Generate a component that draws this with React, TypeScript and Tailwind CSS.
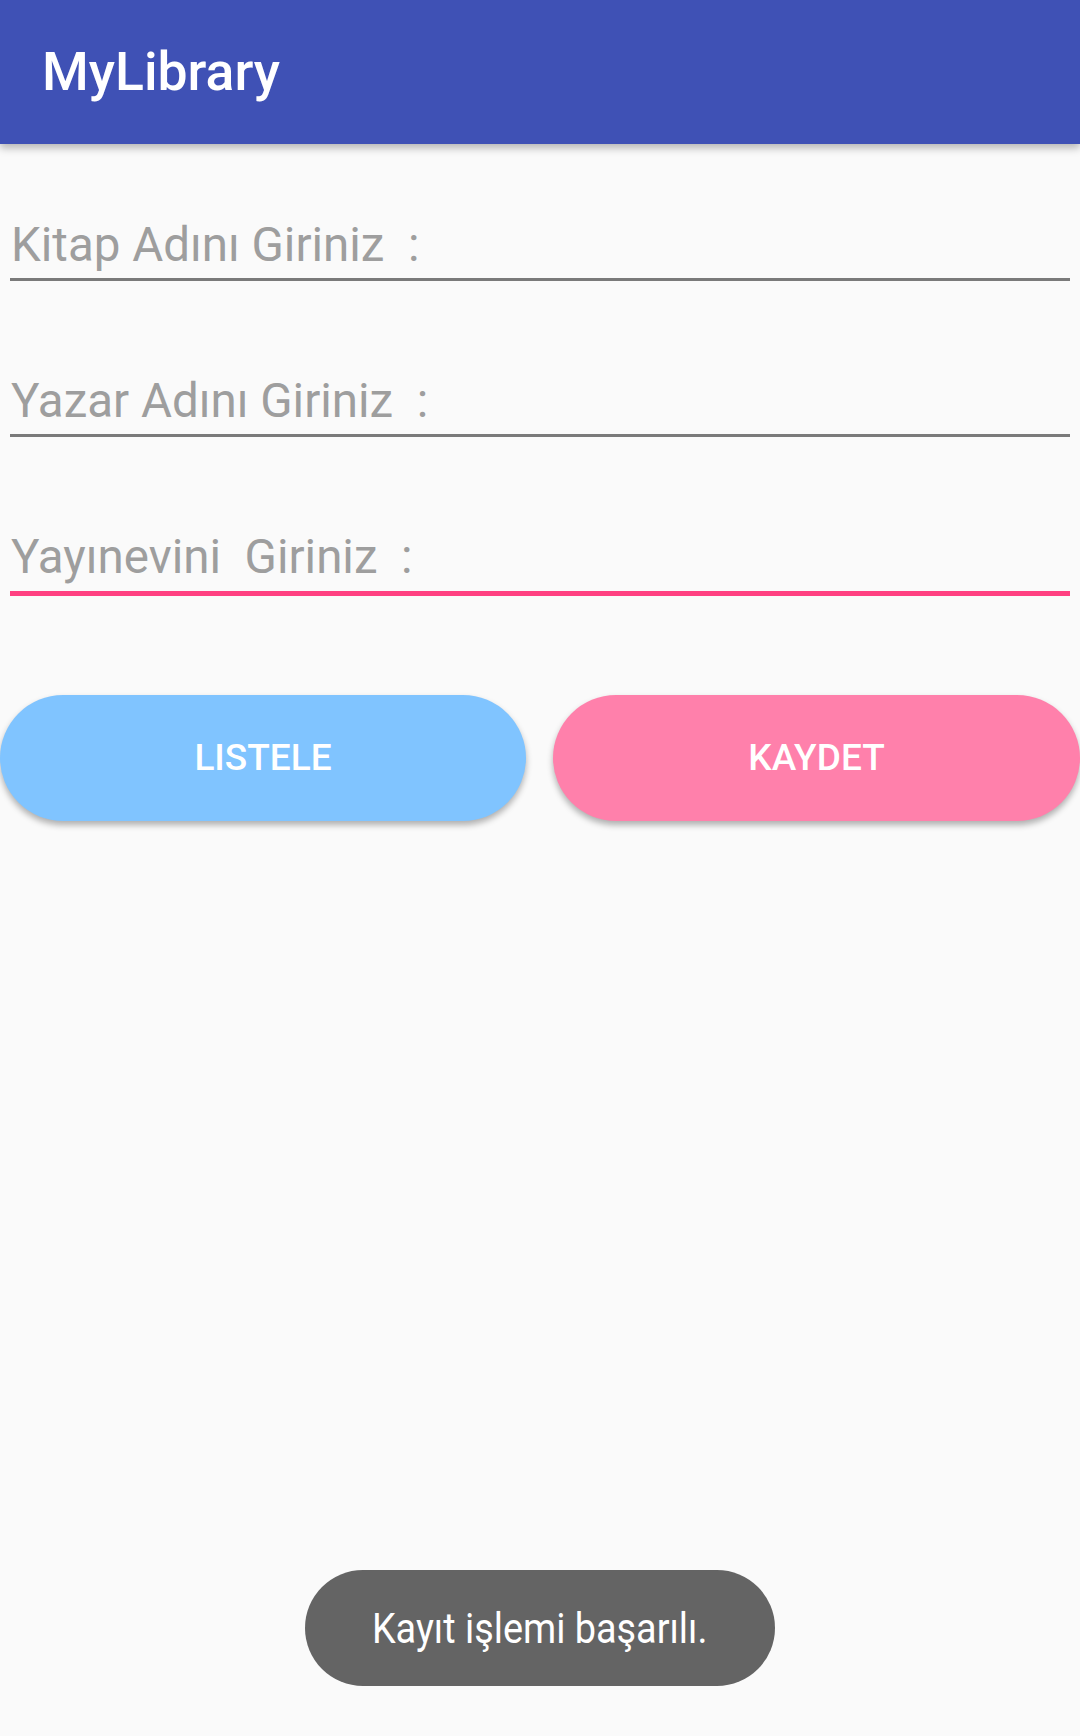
import React from 'react';

const fields = [
  { label: 'Kitap Adını Giriniz  :', focused: false },
  { label: 'Yazar Adını Giriniz  :', focused: false },
  { label: 'Yayınevini  Giriniz  :', focused: true },
];

export default function App() {
  return (
    <div
      className="relative min-h-[1736px] w-full bg-[#fafafa]"
      style={{ fontFamily: 'Roboto, "Noto Sans", sans-serif' }}
    >
      <header className="flex h-[144px] items-center bg-[#3f51b5] pl-[42px] shadow-[0_4px_8px_rgba(0,0,0,0.28)]">
        <h1 className="text-[53.5px] font-medium leading-[64px] text-white">MyLibrary</h1>
      </header>

      <div className="px-[10px] pt-[73px]">
        {fields.map((f, i) => (
          <div
            key={f.label}
            className={
              (i > 0 ? 'mt-[92px] ' : '') +
              (f.focused
                ? 'border-b-[5px] border-[#ff4081] pb-[6px]'
                : 'border-b-[3px] border-[#7a7a7a] pb-[5px]')
            }
          >
            <span className="block whitespace-pre pl-[1px] text-[47.5px] leading-[56px] text-[#9e9e9e]">
              {f.label}
            </span>
          </div>
        ))}
      </div>

      <div className="mt-[99px] flex justify-between">
        <button className="h-[126px] w-[526px] rounded-full bg-[#80c4ff] text-[37px] font-medium text-white shadow-[0_4px_6px_rgba(0,0,0,0.3)]">
          LISTELE
        </button>
        <button className="h-[126px] w-[527px] rounded-full bg-[#ff80ab] text-[37px] font-medium text-white shadow-[0_4px_6px_rgba(0,0,0,0.3)]">
          KAYDET
        </button>
      </div>

      <div className="absolute bottom-[50px] left-1/2 flex h-[116px] w-[470px] -translate-x-1/2 items-center justify-center rounded-full bg-[#646464]">
        <span className="inline-block scale-x-[0.88] whitespace-nowrap text-[43px] text-white">
          Kayıt işlemi başarılı.
        </span>
      </div>
    </div>
  );
}
